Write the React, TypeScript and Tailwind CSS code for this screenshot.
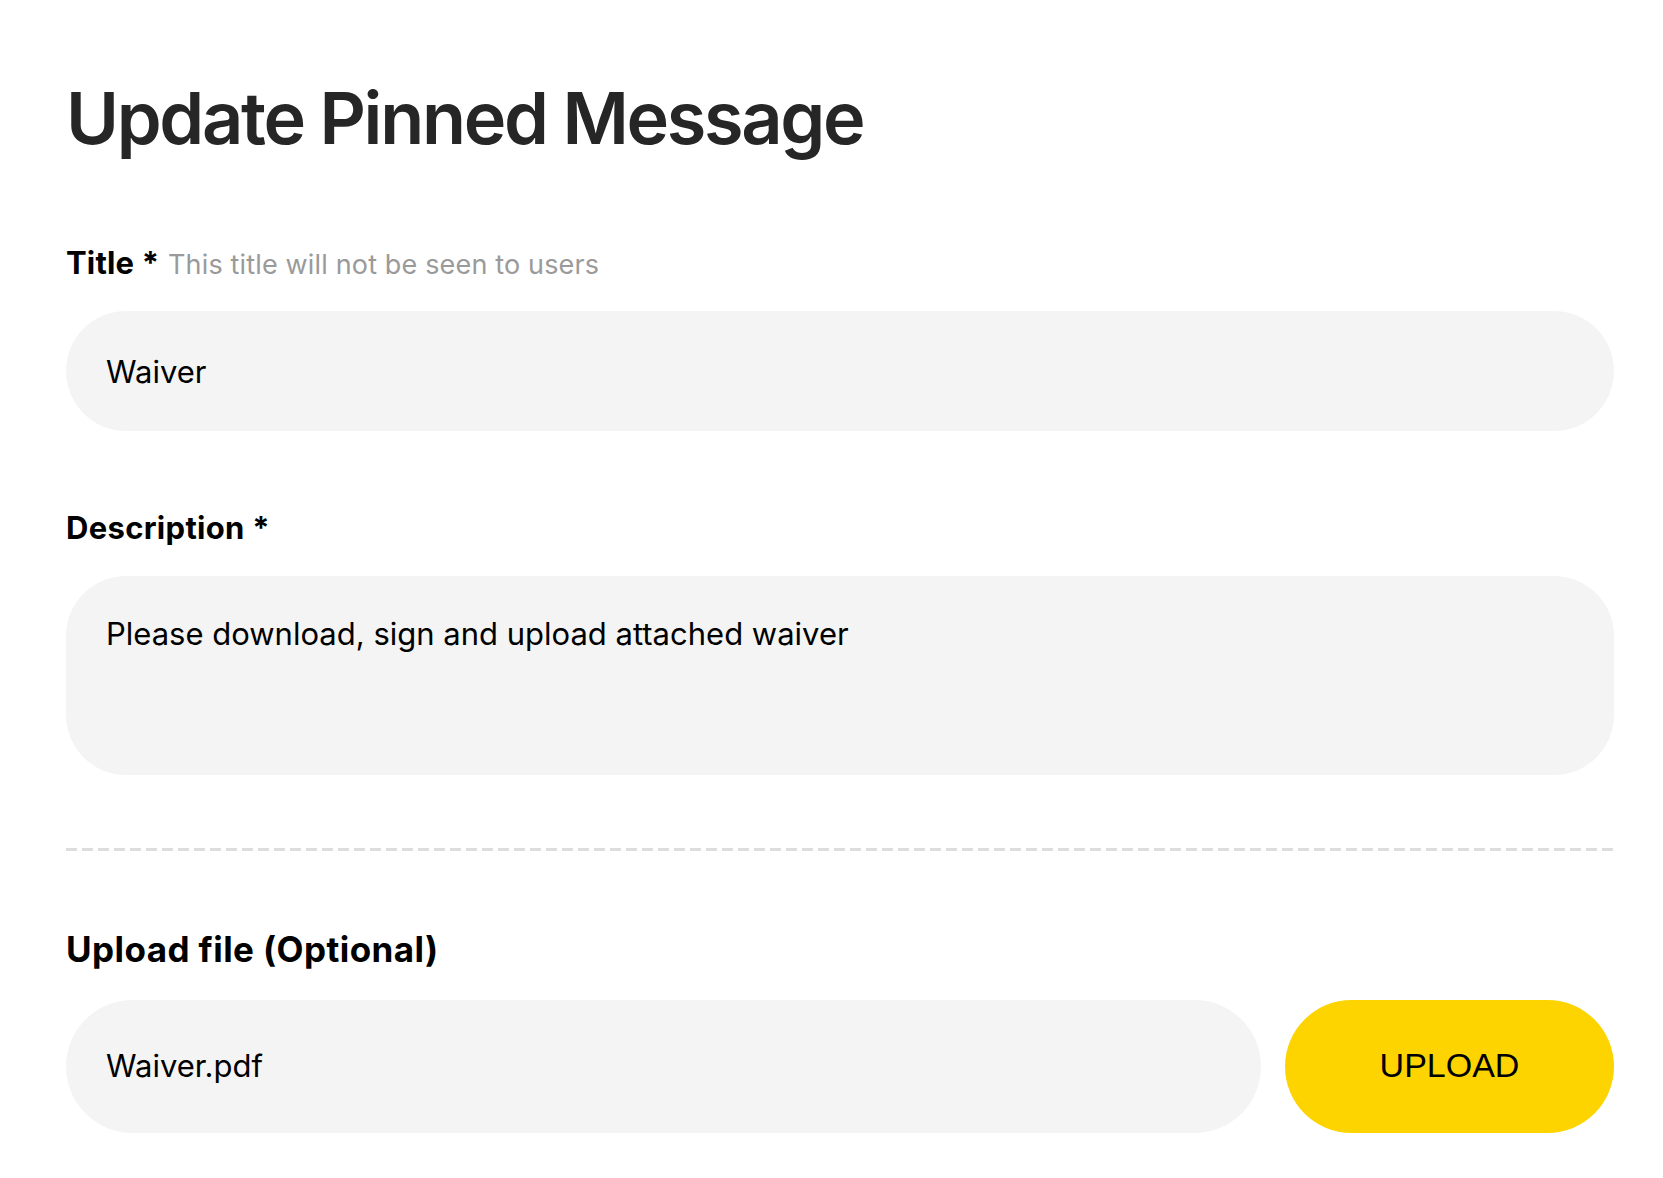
import { useState } from "react";

export default function App() {
  const [title, setTitle] = useState("Waiver");
  const [description, setDescription] = useState(
    "Please download, sign and upload attached waiver"
  );

  return (
    <div className="min-h-screen w-full bg-white font-['Inter','Noto_Sans',sans-serif] text-black">
      <div className="flex w-[1548px] flex-col pl-[66px] pt-[82px] box-content">
        <h1 className="text-[72px] font-semibold leading-[72px] tracking-[-0.032em] text-[#262626]">
          Update Pinned Message
        </h1>

        {/* Title */}
        <label className="mt-[94px] text-[31px] leading-[30px] tracking-[0.005em]">
          <span className="font-bold">Title *</span>{" "}
          <span className="text-[27px] text-[#9a9a9a]">This title will not be seen to users</span>
        </label>
        <input
          value={title}
          onChange={(e) => setTitle(e.target.value)}
          className="mt-[31px] h-[120px] w-full rounded-[60px] bg-[#f4f4f4] px-[40px] text-[31px] text-black outline-none"
        />

        {/* Description */}
        <label className="mt-[82px] text-[31px] font-bold leading-[30px] tracking-[0.01em]">
          Description *
        </label>
        <textarea
          value={description}
          onChange={(e) => setDescription(e.target.value)}
          className="mt-[33px] h-[199px] w-full resize-none rounded-[60px] bg-[#f4f4f4] px-[40px] pt-[39px] text-[31px] leading-[1.21] text-black outline-none"
        />

        <div className="mt-[73px] h-[3px] w-full bg-[repeating-linear-gradient(to_right,#dddddd_0_11px,transparent_11px_16px)]" />

        {/* Upload */}
        <label className="mt-[82px] text-[35px] font-bold leading-[32px] tracking-[0.012em]">
          Upload file (Optional)
        </label>
        <div className="mt-[35px] flex h-[133px] gap-6">
          <div className="flex flex-1 items-center rounded-full bg-[#f4f4f4] pl-[40px] text-[31px] text-black">
            Waiver.pdf
          </div>
          <button className="w-[329px] cursor-pointer rounded-full bg-[#fdd400] pb-[3px] font-['Liberation_Sans',Arial,sans-serif] text-[34px] text-black">
            UPLOAD
          </button>
        </div>
      </div>
    </div>
  );
}
